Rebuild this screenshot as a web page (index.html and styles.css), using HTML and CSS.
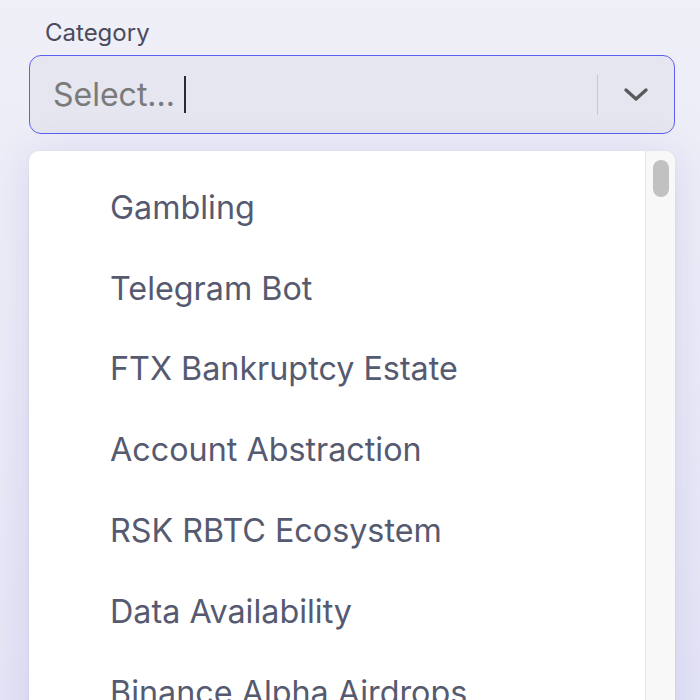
FILE: index.html
```html
<!DOCTYPE html>
<html>
<head>
<meta charset="utf-8">
<link rel="stylesheet" href="styles.css">
</head>
<body>
<div class="field">
  <label class="label">Category</label>
  <div class="control">
    <div class="value">
      <span class="placeholder">Select...</span><span class="caret"></span>
    </div>
    <span class="sep"></span>
    <span class="indicator">
      <svg width="26" height="16" viewBox="0 0 26 16"><path d="M3 3 L13 12 L23 3" fill="none" stroke="#5a5a5e" stroke-width="3.4" stroke-linecap="round" stroke-linejoin="round"/></svg>
    </span>
  </div>
  <div class="menu">
    <ul class="list">
      <li class="option">Gambling</li>
      <li class="option">Telegram Bot</li>
      <li class="option">FTX Bankruptcy Estate</li>
      <li class="option">Account Abstraction</li>
      <li class="option">RSK RBTC Ecosystem</li>
      <li class="option">Data Availability</li>
      <li class="option">Binance Alpha Airdrops</li>
    </ul>
    <div class="scrollbar"><div class="thumb"></div></div>
  </div>
</div>
</body>
</html>
```

FILE: styles.css
```css
html, body {
  margin: 0;
  height: 100%;
}
body {
  background: linear-gradient(180deg, #efeff8 0%, #ebebf7 50%, #e5e5f6 100%);
  font-family: Inter, "Noto Sans", sans-serif;
  overflow: hidden;
}
.field {
  padding: 18px 25px 0 29px;
  display: flex;
  flex-direction: column;
}
.label {
  font-size: 24px;
  color: #4b4b5c;
  padding-left: 16px;
  line-height: 30px;
  margin-bottom: 7px;
}
.control {
  height: 77px;
  border: 1.5px solid #5d5ff0;
  border-radius: 12px;
  background: #e6e6f0;
  display: flex;
  align-items: center;
}
.value {
  flex: 1;
  display: flex;
  align-items: center;
  padding-left: 23px;
}
.placeholder {
  font-size: 32px;
  color: #7a7a7a;
}
.caret {
  width: 2px;
  height: 37px;
  background: #2a2a3a;
  margin-left: 9px;
}
.sep {
  width: 1.5px;
  height: 40px;
  background: #c8c8cc;
}
.indicator {
  width: 76px;
  display: flex;
  justify-content: center;
  align-items: center;
}
.menu {
  margin-top: 17px;
  background: #fff;
  border-radius: 10px;
  box-shadow: 0 4px 40px rgba(90, 90, 200, 0.16), 0 1px 4px rgba(60, 60, 120, 0.06);
  display: flex;
  height: 600px;
  overflow: hidden;
}
.list {
  list-style: none;
  margin: 0;
  padding: 16px 0 0 0;
  flex: 1;
}
.option {
  height: 80.8px;
  display: flex;
  align-items: center;
  padding-left: 81px;
  font-size: 32.3px;
  color: #565a70;
}
.scrollbar {
  width: 29px;
  background: #f8f8f8;
  border-left: 1px solid #e6e6e6;
  padding-top: 9px;
  display: flex;
  justify-content: center;
}
.thumb {
  width: 16px;
  height: 37px;
  border-radius: 8px;
  background: #c1c1c1;
}
```
